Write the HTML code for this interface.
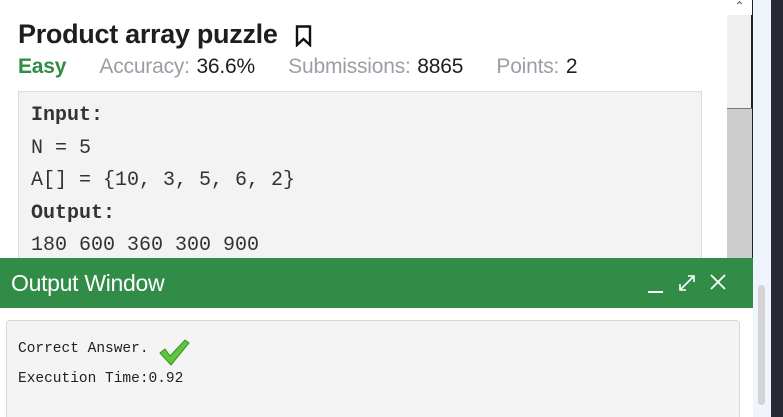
<!DOCTYPE html>
<html><head><style>
*{margin:0;padding:0;box-sizing:border-box}
html,body{width:783px;height:417px;overflow:hidden}
body{background:#fff;position:relative;font-family:"Liberation Sans",sans-serif}
.abs{position:absolute}
.title{left:18px;top:19px;font-size:27px;font-weight:bold;color:#1e1e1e;letter-spacing:-0.3px;white-space:nowrap}
.stats{left:18px;top:55px;font-size:21px;color:#9a9ea6;white-space:nowrap;letter-spacing:-0.2px;word-spacing:1px}
.stats b{font-weight:normal;color:#1e1e1e}
.code{left:18px;top:91px;width:684px;height:200px;background:#f3f3f3;border:1px solid #ddd;font-family:"Liberation Mono",monospace;font-size:20px;color:#333;padding:8px 0 0 12px;line-height:32.5px}
.green{left:0;top:258px;width:753px;height:50px;background:#318c47}
.out{left:6px;top:320px;width:734px;height:100px;background:#f4f4f4;border:1px solid #d8d8d8;border-radius:4px}
.mono{font-family:'Liberation Mono',monospace;font-size:14.5px;color:#222}
</style></head><body>
<div class="abs title">Product array puzzle</div>
<svg class="abs" style="left:295px;top:25px" width="18" height="22" viewBox="0 0 18 22"><path d="M2 1.5H15V20L8.5 14L2 20Z" fill="none" stroke="#111" stroke-width="2.4"/></svg>
<div class="abs stats"><span style="color:#2f8d46;font-weight:bold">Easy</span>&nbsp;&nbsp;&nbsp;&nbsp;&nbsp;Accuracy: <b>36.6%</b>&nbsp;&nbsp;&nbsp;&nbsp;&nbsp;Submissions: <b>8865</b>&nbsp;&nbsp;&nbsp;&nbsp;&nbsp;Points: <b>2</b></div>
<div class="abs code"><b>Input:</b><br>N = 5<br>A[] = {10, 3, 5, 6, 2}<br><b>Output:</b><br>180 600 360 300 900</div>
<div class="abs" style="left:727px;top:0;width:26px;height:258px;background:#efefef;border-right:2px solid #222"></div>
<div class="abs" style="left:727px;top:0;width:25px;height:15px;background:#fff;color:#555;font-size:12px;text-align:center;line-height:12px">&#8963;</div>
<div class="abs" style="left:727px;top:108px;width:25px;height:150px;background:#cdcdcd;border-top:1px solid #777"></div>
<div class="abs" style="left:753px;top:0;width:18px;height:417px;background:#f0f4fc"></div>
<div class="abs" style="left:771px;top:0;width:12px;height:417px;background:#272a35"></div>
<div class="abs" style="left:758px;top:285px;width:7px;height:120px;background:#d4d4d4;border-radius:4px"></div>
<div class="abs green"></div>
<div class="abs" style="left:11px;top:270px;font-size:23px;color:#fff;letter-spacing:-0.3px">Output Window</div>
<div class="abs" style="left:648px;top:291px;width:15px;height:2px;background:#fff"></div>
<svg class="abs" style="left:678px;top:274px" width="18" height="18" viewBox="0 0 18 18"><path d="M2 16L16 2M10 2H16V8M2 10V16H8" fill="none" stroke="#fff" stroke-width="1.6"/></svg>
<svg class="abs" style="left:710px;top:274px" width="16" height="16" viewBox="0 0 16 16"><path d="M1 1L15 15M15 1L1 15" stroke="#fff" stroke-width="1.8"/></svg>
<div class="abs out"></div>
<div class="abs mono" style="left:18px;top:341px">Correct Answer.</div>
<svg class="abs" style="left:158px;top:338px" width="32" height="28" viewBox="0 0 32 28"><path d="M2 15L7 11L12 18L27 2L31 5L13 27Z" fill="#5cc63d" stroke="#3a8f2a" stroke-width="1"/></svg>
<div class="abs mono" style="left:18px;top:371px">Execution Time:0.92</div>
</body></html>
